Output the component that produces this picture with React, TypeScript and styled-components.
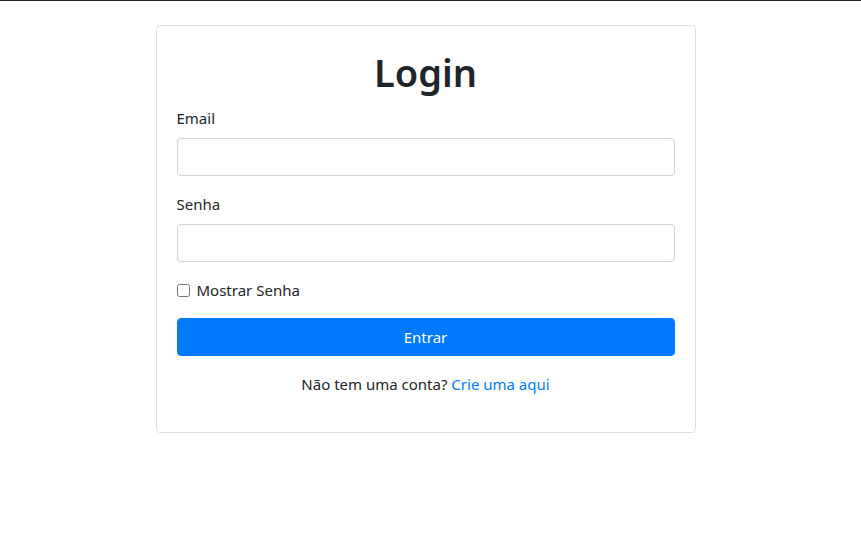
import { useState } from "react";
import styled, { createGlobalStyle } from "styled-components";

const GlobalStyle = createGlobalStyle`
    html, body {
        margin: 0;
        padding: 0;
        background-color: #fff;
    }
    body {
        font-family: 'Noto Sans', 'Open Sans', sans-serif;
        font-size: 15px;
        line-height: 1.5;
        color: #212529;
        border-top: 1px solid #222;
    }
    * {
        box-sizing: border-box;
    }
`;

const App = () => {
    const [email, setEmail] = useState('');
    const [senha, setSenha] = useState('');
    const [mostrar, setMostrar] = useState(false);

    return (
        <>
            <GlobalStyle />
            <Page>
                <Card>
                    <Title>Login</Title>
                    <Group>
                        <Label htmlFor="email">Email</Label>
                        <Input id="email" type="email" value={email} onChange={(e) => setEmail(e.target.value)} />
                    </Group>
                    <Group>
                        <Label htmlFor="senha">Senha</Label>
                        <Input id="senha" type={mostrar ? 'text' : 'password'} value={senha} onChange={(e) => setSenha(e.target.value)} />
                    </Group>
                    <CheckRow>
                        <Check id="mostrar" type="checkbox" checked={mostrar} onChange={(e) => setMostrar(e.target.checked)} />
                        <CheckLabel htmlFor="mostrar">Mostrar Senha</CheckLabel>
                    </CheckRow>
                    <SubmitButton type="button">Entrar</SubmitButton>
                    <Footer>
                        Não tem uma conta? <FooterLink href="#">Crie uma aqui</FooterLink>
                    </Footer>
                </Card>
            </Page>
        </>
    );
}

export default App;


const Page = styled.div`
    display: flex;
    justify-content: center;
    padding: 24px 10px 0 0;
`;

const Card = styled.div`
    display: flex;
    flex-direction: column;
    width: 540px;
    padding: 20px;
    border: 1px solid rgba(0, 0, 0, 0.125);
    border-radius: 4px;
`;

const Title = styled.h1`
    margin: 2px 0 10px 0;
    font-size: 38px;
    line-height: 48px;
    font-weight: 600;
    text-align: center;
`;

const Group = styled.div`
    display: flex;
    flex-direction: column;
    margin: 0 0 16px 0;
`;

const Label = styled.label`
    display: inline-block;
    line-height: 24px;
    margin: 0 0 8px 0;
`;

const Input = styled.input`
    display: block;
    width: 100%;
    height: 38px;
    padding: 6px 12px;
    font-size: 16px;
    font-family: inherit;
    color: #495057;
    background-color: #fff;
    border: 1px solid #ced4da;
    border-radius: 4px;
    outline: none;
`;

const CheckRow = styled.div`
    display: flex;
    align-items: center;
    gap: 7px;
    height: 24px;
    margin: 0 0 16px 0;
`;

const Check = styled.input`
    width: 13px;
    height: 13px;
    margin: 0;
`;

const CheckLabel = styled.label`
    line-height: 24px;
`;

const SubmitButton = styled.button`
    display: block;
    width: 100%;
    height: 38px;
    font-size: 15px;
    font-family: inherit;
    color: #fff;
    background-color: #007bff;
    border: 1px solid #007bff;
    border-radius: 4px;
    cursor: pointer;
`;

const Footer = styled.p`
    margin: 16px 0 16px 0;
    line-height: 24px;
    text-align: center;
`;

const FooterLink = styled.a`
    color: #007bff;
    text-decoration: none;
`;
